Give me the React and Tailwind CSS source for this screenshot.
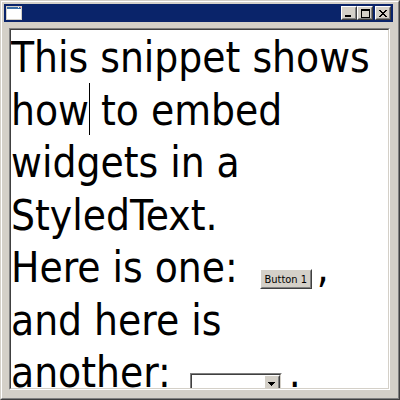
import React from 'react';

// classic 3D edges
const Raised = ({ className = '', children }) => (
    <div className={`border border-t-white border-l-white border-r-[#404040] border-b-[#404040] ${className}`}>
        <div className="w-full h-full border border-t-[#d4d0c8] border-l-[#d4d0c8] border-r-[#808080] border-b-[#808080] bg-[#d4d0c8] flex items-center justify-center">
            {children}
        </div>
    </div>
);

const Sunken = ({ className = '', children }) => (
    <div className={`border border-t-[#808080] border-l-[#808080] border-r-white border-b-white ${className}`}>
        <div className="w-full h-full border border-t-[#404040] border-l-[#404040] border-r-[#d4d0c8] border-b-[#d4d0c8] bg-white overflow-hidden">
            {children}
        </div>
    </div>
);

const TitleIcon = () => (
    <svg width="16" height="14" viewBox="0 0 16 14" shapeRendering="crispEdges">
        <rect x="0" y="0" width="16" height="14" fill="#d4d0c8" />
        <rect x="1" y="1" width="14" height="12" fill="#ffffff" />
        <rect x="1" y="1" width="14" height="2" fill="#3a6ea5" />
        <rect x="12" y="1" width="1" height="1" fill="#ffffff" />
        <rect x="14" y="1" width="1" height="1" fill="#ff8080" />
    </svg>
);

const CaptionButton = ({ children, className = '' }) => (
    <Raised className={`w-4 h-[14px] ${className}`}>{children}</Raised>
);

const WidgetButton = () => (
    <span className="inline-block overflow-hidden align-[-7px] ml-[10px] mr-[5px] w-[52px] h-[20px]">
        <Raised className="w-full h-full">
            <span className="text-[11px] leading-none text-black font-['DejaVu_Sans_Condensed','DejaVu_Sans',sans-serif]">Button 1</span>
        </Raised>
    </span>
);

const WidgetCombo = () => (
    <span className="inline-block overflow-hidden align-[-7px] ml-[7px] mr-[7px] w-[92px] h-[21px]">
        <Sunken className="w-full h-full">
            <div className="flex justify-end h-full">
                <Raised className="w-4 h-full">
                    <svg width="7" height="4" viewBox="0 0 7 4" shapeRendering="crispEdges">
                        <path d="M0 0h7v1h-1v1h-1v1h-1v1h-1v-1h-1v-1h-1v-1h-1z" fill="#000" />
                    </svg>
                </Raised>
            </div>
        </Sunken>
    </span>
);

export default function App() {
    return (
        <div className="w-[400px] h-[400px] border border-t-[#d4d0c8] border-l-[#d4d0c8] border-r-[#404040] border-b-[#404040]">
            <div className="w-full h-full border border-t-white border-l-white border-r-[#808080] border-b-[#808080] bg-[#d4d0c8] p-[2px] flex flex-col">
                {/* title bar */}
                <div className="h-[18px] bg-[#0a246a] flex items-center pl-[2px] pr-[2px] mr-[3px] shrink-0">
                    <TitleIcon />
                    <div className="flex-1" />
                    <CaptionButton>
                        <svg width="6" height="2" viewBox="0 0 6 2" className="mt-[6px] -ml-[2px]"><rect width="6" height="2" fill="#000" /></svg>
                    </CaptionButton>
                    <CaptionButton>
                        <svg width="9" height="9" viewBox="0 0 9 9" shapeRendering="crispEdges">
                            <path d="M0 0h9v9h-9z M1 2v6h7v-6z" fill="#000" fillRule="evenodd" />
                        </svg>
                    </CaptionButton>
                    <CaptionButton className="ml-[2px]">
                        <svg width="8" height="7" viewBox="0 0 8 7" shapeRendering="crispEdges">
                            <path d="M0 0h2v1h1v1h2v-1h1v-1h2v1h-1v1h-1v1h-1v1h1v1h1v1h1v1h-2v-1h-1v-1h-2v1h-1v1h-2v-1h1v-1h1v-1h1v-1h-1v-1h-1v-1h-1z" fill="#000" />
                        </svg>
                    </CaptionButton>
                </div>

                {/* text area */}
                <Sunken className="mt-[6px] ml-[5px] mr-[6px] mb-[6px] flex-1 min-h-0">
                    <div className="pt-[2px] text-[42px] leading-[52.5px] text-black whitespace-nowrap font-['DejaVu_Sans_Condensed','DejaVu_Sans',sans-serif]">
                        <div>This snippet shows</div>
                        <div>
                            <span className="relative">
                                how
                                <span className="absolute right-[-1px] top-[-3px] h-[52px] w-px bg-black" />
                            </span>{' '}
                            to embed
                        </div>
                        <div>widgets in a</div>
                        <div>StyledText.</div>
                        <div>Here is one: <WidgetButton />,</div>
                        <div>and here is</div>
                        <div>another: <WidgetCombo />.</div>
                    </div>
                </Sunken>
            </div>
        </div>
    );
}
